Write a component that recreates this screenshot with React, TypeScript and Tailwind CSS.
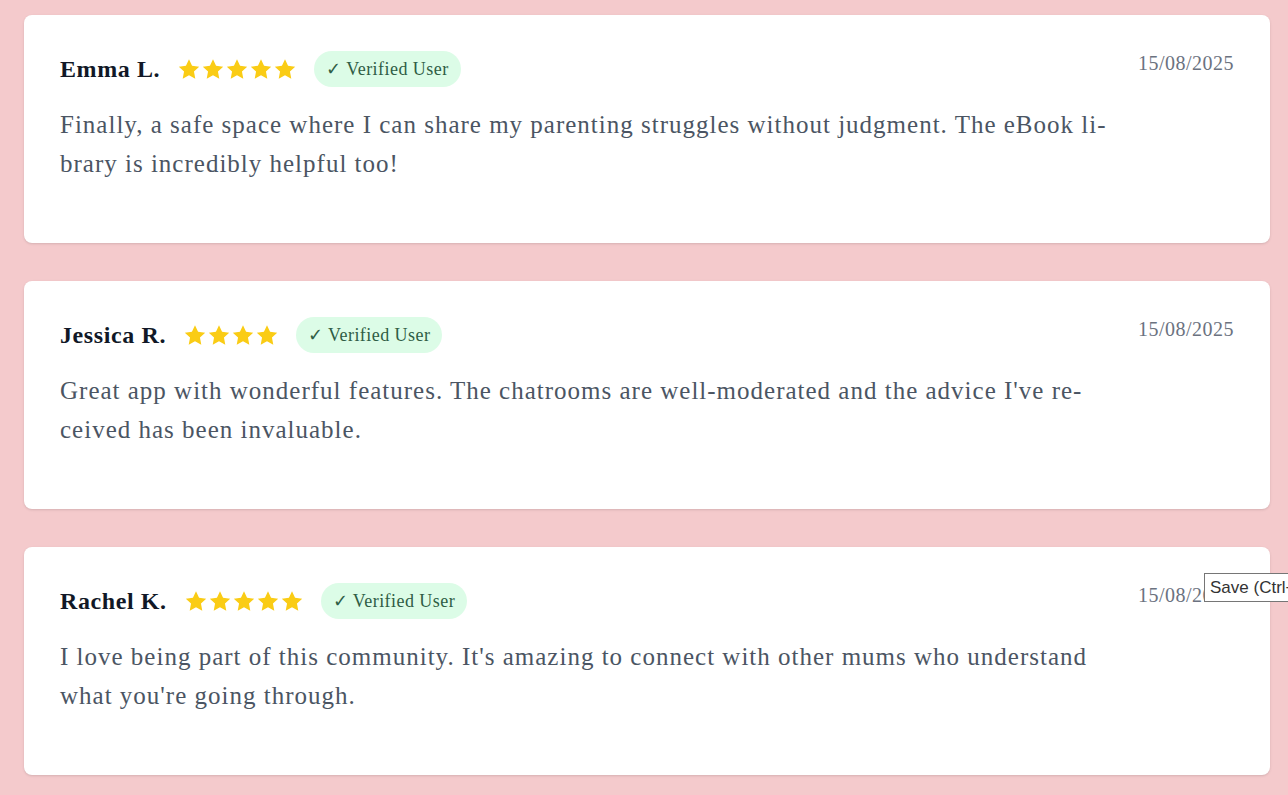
const reviews = [
  {
    name: 'Emma L.',
    stars: 5,
    date: '15/08/2025',
    text: 'Finally, a safe space where I can share my parenting struggles without judgment. The eBook li\u00ADbrary is incredibly helpful too!',
  },
  {
    name: 'Jessica R.',
    stars: 4,
    date: '15/08/2025',
    text: "Great app with wonderful features. The chatrooms are well-moderated and the advice I've re\u00ADceived has been invaluable.",
  },
  {
    name: 'Rachel K.',
    stars: 5,
    date: '15/08/2025',
    text: "I love being part of this community. It's amazing to connect with other mums who understand what you're going through.",
  },
];

function Star() {
  return (
    <svg viewBox="1 1.5 22 21" className="w-[22px] h-[21px] fill-[#facc15]">
      <path d="M12 1.8l3.05 6.5 7.15.85-5.25 4.95 1.35 7.1L12 17.7l-6.3 3.5 1.35-7.1L1.8 9.15l7.15-.85z" />
    </svg>
  );
}

function ReviewCard({ name, stars, date, text }: (typeof reviews)[number]) {
  return (
    <div className="bg-white rounded-lg shadow-sm px-9 pt-9 pb-[60px] flex gap-6">
      <div className="flex-1">
        <div className="flex items-center gap-[18px] h-9">
          <span className="text-[24px] font-bold text-[#111827] tracking-wide">{name}</span>
          <div className="flex gap-[2px]">
            {Array.from({ length: stars }).map((_, i) => (
              <Star key={i} />
            ))}
          </div>
          <span className="h-9 px-3 flex items-center rounded-full bg-[#dcfce7] text-[#2f5d45] text-[18px] tracking-wide">
            ✓ Verified User
          </span>
        </div>
        <p className="mt-[18px] text-[25px] leading-[39px] tracking-[0.04em] text-[#4b5563]">{text}</p>
      </div>
      <div className="text-[20px] leading-6 tracking-wide text-[#6b7280] whitespace-nowrap">{date}</div>
    </div>
  );
}

export default function App() {
  return (
    <div className="min-h-screen bg-[#f4cacc] pl-6 pr-[18px] pt-[15px] pb-5 font-['Liberation_Serif',serif]">
      <div className="flex flex-col gap-[38px]">
        {reviews.map((r) => (
          <ReviewCard key={r.name} {...r} />
        ))}
      </div>

      {/* browser tooltip caught in the shot */}
      <div className="fixed left-[1204px] top-[573px] bg-white border border-[#767676] px-[5px] py-[2px] text-[17px] leading-[23px] text-[#333] whitespace-nowrap font-['Liberation_Sans',sans-serif]">
        Save (Ctrl+S)
      </div>
    </div>
  );
}
